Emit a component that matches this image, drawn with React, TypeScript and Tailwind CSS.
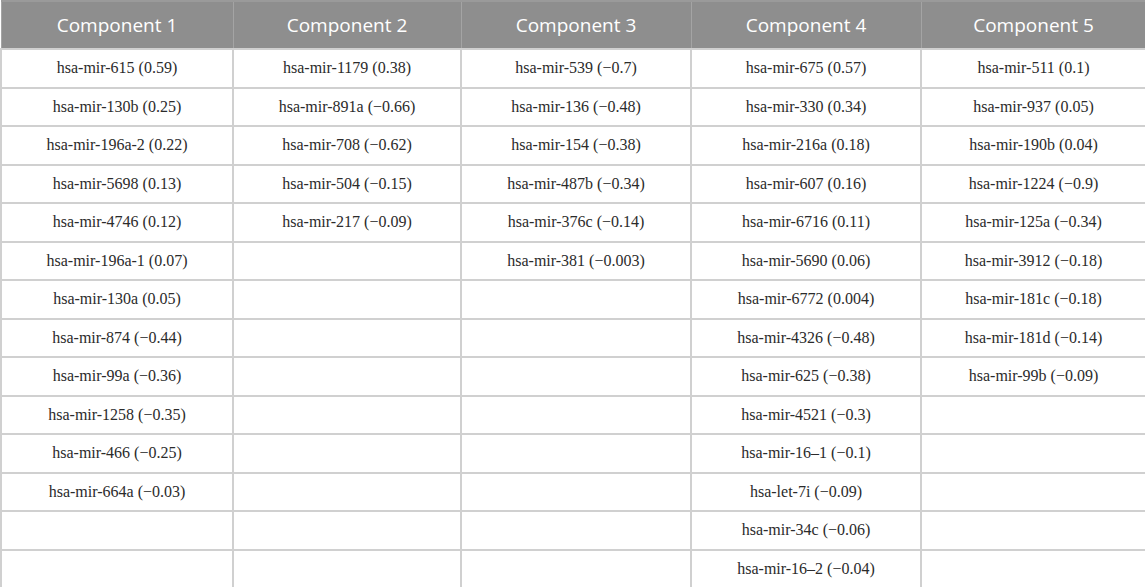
import React from 'react';

// columns of the mirna component table
const columns: string[][] = [
  [
    'hsa-mir-615 (0.59)',
    'hsa-mir-130b (0.25)',
    'hsa-mir-196a-2 (0.22)',
    'hsa-mir-5698 (0.13)',
    'hsa-mir-4746 (0.12)',
    'hsa-mir-196a-1 (0.07)',
    'hsa-mir-130a (0.05)',
    'hsa-mir-874 (\u22120.44)',
    'hsa-mir-99a (\u22120.36)',
    'hsa-mir-1258 (\u22120.35)',
    'hsa-mir-466 (\u22120.25)',
    'hsa-mir-664a (\u22120.03)',
  ],
  [
    'hsa-mir-1179 (0.38)',
    'hsa-mir-891a (\u22120.66)',
    'hsa-mir-708 (\u22120.62)',
    'hsa-mir-504 (\u22120.15)',
    'hsa-mir-217 (\u22120.09)',
  ],
  [
    'hsa-mir-539 (\u22120.7)',
    'hsa-mir-136 (\u22120.48)',
    'hsa-mir-154 (\u22120.38)',
    'hsa-mir-487b (\u22120.34)',
    'hsa-mir-376c (\u22120.14)',
    'hsa-mir-381 (\u22120.003)',
  ],
  [
    'hsa-mir-675 (0.57)',
    'hsa-mir-330 (0.34)',
    'hsa-mir-216a (0.18)',
    'hsa-mir-607 (0.16)',
    'hsa-mir-6716 (0.11)',
    'hsa-mir-5690 (0.06)',
    'hsa-mir-6772 (0.004)',
    'hsa-mir-4326 (\u22120.48)',
    'hsa-mir-625 (\u22120.38)',
    'hsa-mir-4521 (\u22120.3)',
    'hsa-mir-16\u20131 (\u22120.1)',
    'hsa-let-7i (\u22120.09)',
    'hsa-mir-34c (\u22120.06)',
    'hsa-mir-16\u20132 (\u22120.04)',
  ],
  [
    'hsa-mir-511 (0.1)',
    'hsa-mir-937 (0.05)',
    'hsa-mir-190b (0.04)',
    'hsa-mir-1224 (\u22120.9)',
    'hsa-mir-125a (\u22120.34)',
    'hsa-mir-3912 (\u22120.18)',
    'hsa-mir-181c (\u22120.18)',
    'hsa-mir-181d (\u22120.14)',
    'hsa-mir-99b (\u22120.09)',
  ],
];

const ROW_COUNT = 14;

export default function App() {
  const rows = Array.from({ length: ROW_COUNT }, (_, i) => columns.map((col) => col[i] ?? ''));

  return (
    <div className="w-[1145px] h-[587px] bg-white overflow-hidden">
      <table className="w-[1145px] table-fixed border-collapse">
        <colgroup>
          <col className="w-[232px]" />
          <col className="w-[228px]" />
          <col className="w-[230px]" />
          <col className="w-[230px]" />
          <col className="w-[225px]" />
        </colgroup>
        <thead>
          <tr className="h-[48px] bg-[#8e8e8e] border-t-2 border-[#9a9a9a]">
            {[1, 2, 3, 4, 5].map((n) => (
              <th
                key={n}
                className="p-0 text-center font-normal text-white text-[19px] font-['Open_Sans',sans-serif] border-l border-r border-[#a4a4a4]"
              >
                Component {n}
              </th>
            ))}
          </tr>
        </thead>
        <tbody>
          {rows.map((row, i) => (
            <tr key={i} className="h-[38.5px]">
              {row.map((cell, j) => (
                <td
                  key={j}
                  className="p-0 text-center text-[16px] text-[#2b2b2b] font-['Liberation_Serif',serif] border-2 border-[#d0d0d0]"
                >
                  {cell}
                </td>
              ))}
            </tr>
          ))}
        </tbody>
      </table>
    </div>
  );
}
